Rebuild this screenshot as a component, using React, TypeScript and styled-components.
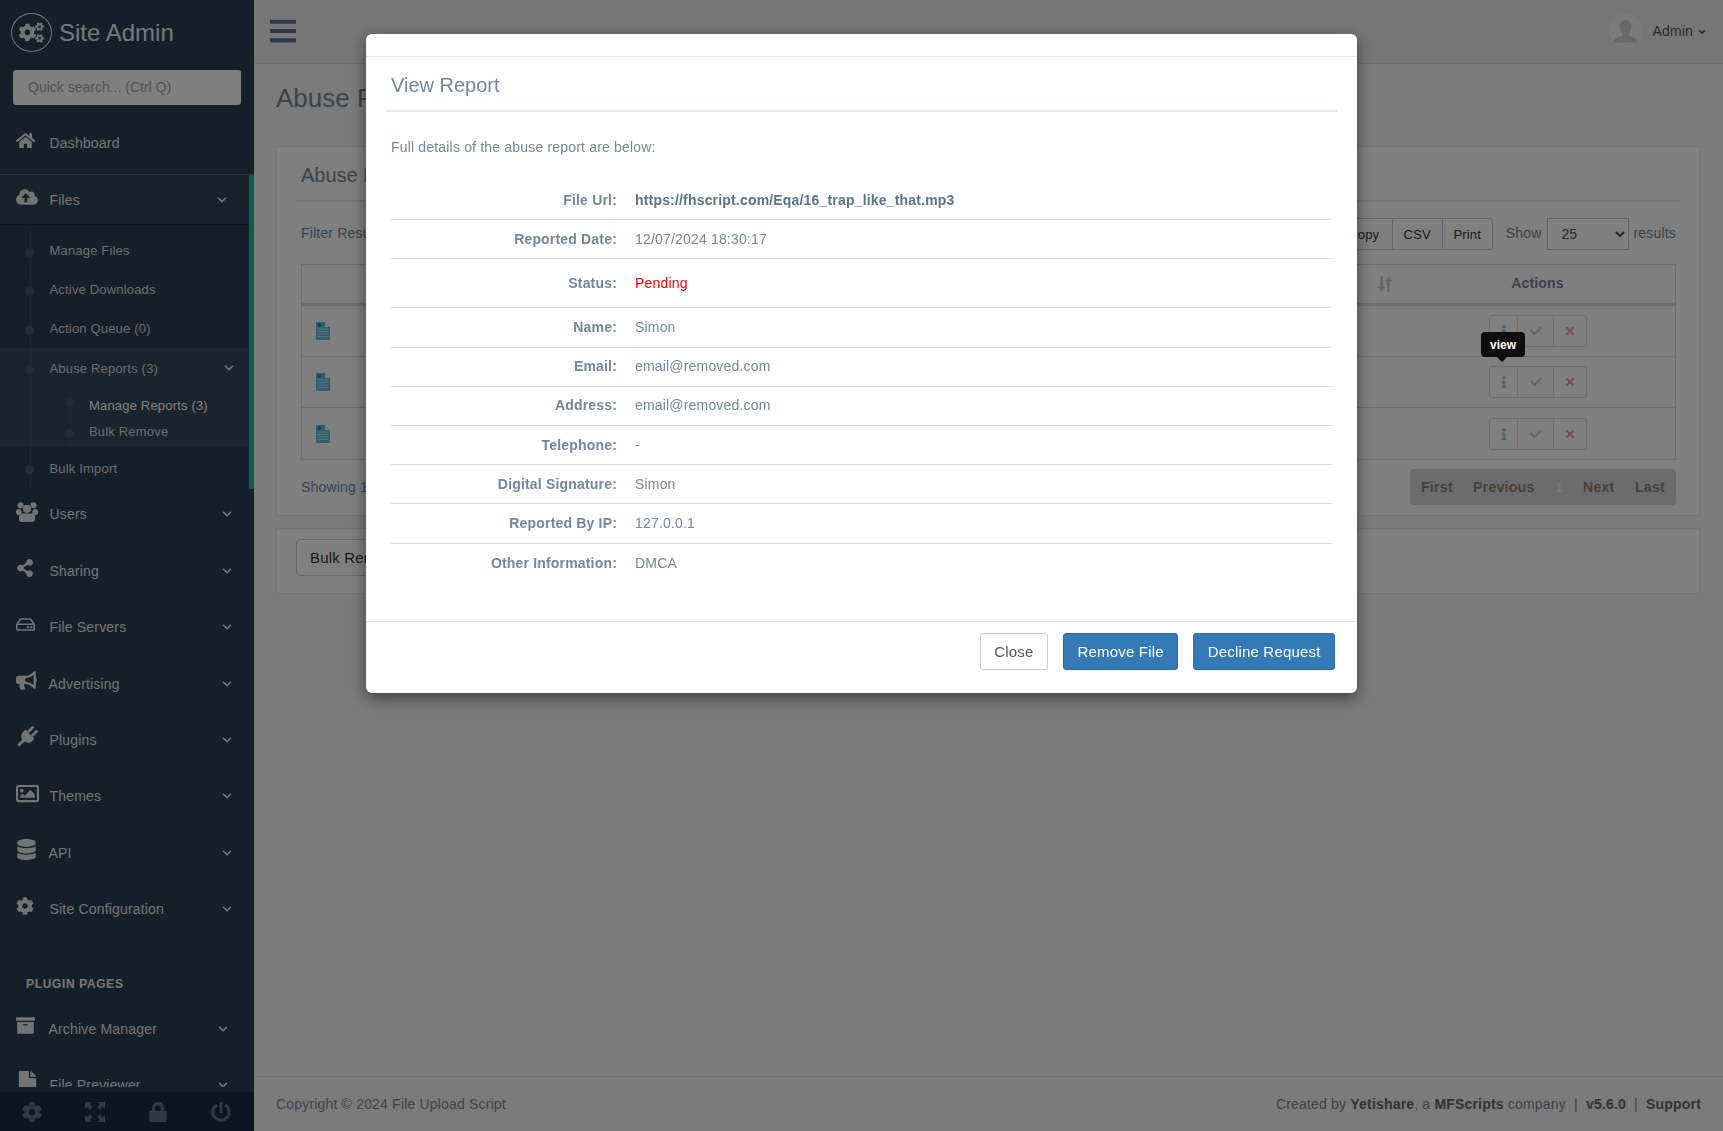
import React from 'react';
import styled, { createGlobalStyle } from 'styled-components';
import {
  FaAngleDown,
  FaArchive,
  FaBars,
  FaBullhorn,
  FaCheck,
  FaChevronDown,
  FaCloudUploadAlt,
  FaCog,
  FaCogs,
  FaDatabase,
  FaFile,
  FaHome,
  FaInfo,
  FaLock,
  FaPowerOff,
  FaRegHdd,
  FaRegImage,
  FaShareAlt,
  FaTimes,
} from 'react-icons/fa';

const GlobalStyle = createGlobalStyle`
  html, body {
    margin: 0;
    height: 100%;
    overflow: hidden;
  }
  body {
    font-family: "Liberation Sans", Arial, sans-serif;
    font-size: 14px;
    letter-spacing: 0.18px;
    color: #73879c;
    background: #f7f7f7;
  }
  * {
    box-sizing: border-box;
  }
`;

const Page = styled.div`
  display: flex;
  height: 1131px;
`;

// sidebar
const Sidebar = styled.aside`
  width: 254px;
  flex: none;
  height: 100%;
  display: flex;
  flex-direction: column;
  background: #2a3f54;
  color: #e7e7e7;
`;

const SidebarScroll = styled.div`
  flex: 1;
  min-height: 0;
  overflow: hidden;
  margin-bottom: 5px;
`;

const Brand = styled.div`
  height: 63px;
  display: flex;
  align-items: center;
  padding: 1px 0 0 11px;
  gap: 7px;
`;

const BrandLogo = styled.span`
  width: 41px;
  height: 39px;
  border: 1px solid #e7e7e7;
  border-radius: 50%;
  display: flex;
  align-items: center;
  justify-content: center;
  font-size: 25px;
`;

const BrandName = styled.span`
  margin-top: 2px;
  font-size: 24px;
  letter-spacing: 0;
  color: #ecf0f1;
`;

const SearchBox = styled.div`
  margin: 7px 13px 13px;
  height: 35px;
  background: #fff;
  border-radius: 3px;
  padding: 0 15px 2px;
  display: flex;
  align-items: center;
  color: #a8a8a8;
  font-size: 14px;
  letter-spacing: 0;
`;

const MenuRow = styled.div<{ $right?: number }>`
  height: 56.4px;
  display: flex;
  align-items: flex-start;
  padding: 0 ${(p) => p.$right ?? 22}px 0 16px;
  font-size: 14px;
  color: #e7e7e7;
  > span {
    line-height: 50px;
  }
`;

const DashboardRow = styled(MenuRow)`
  > span {
    line-height: 51.4px;
  }
`;

const RowIcon = styled.i<{ $size?: number; $width?: number }>`
  width: ${(p) => p.$width ?? 33.5}px;
  flex: none;
  height: 49.4px;
  display: flex;
  align-items: center;
  padding-bottom: 5px;
  font-size: ${(p) => p.$size ?? 18}px;
  color: #e7e7e7;
`;

const Chevron = styled(FaChevronDown)`
  width: 10px;
  height: 10px;
  margin-left: auto;
  color: #e7e7e7;
  flex: none;
`;

const RowChevron = styled(Chevron)`
  margin-top: 20px;
`;

const FilesGroup = styled.div`
  height: 315px;
  border-top: 1px solid #4d5f70;
  border-right: 5px solid #1abb9c;
`;

const FilesHead = styled.div`
  height: 50px;
  display: flex;
  align-items: center;
  padding: 0 22px 0 16px;
  background: linear-gradient(#334556, #2c4257);
  border-bottom: 1px solid #1f2f3f;
  font-size: 14px;
`;

const SubMenu = styled.div`
  position: relative;
  height: 264px;
  padding-top: 6px;
  &::before {
    content: '';
    position: absolute;
    left: 30px;
    top: 6px;
    bottom: 0;
    width: 1px;
    background: #3c5063;
  }
`;

const SubItem = styled.div<{ $height?: number }>`
  position: relative;
  height: ${(p) => p.$height ?? 39}px;
  display: flex;
  align-items: center;
  padding-left: 49.5px;
  font-size: 13px;
  color: #d5d9dd;
  &::before {
    content: '';
    position: absolute;
    left: 25px;
    top: 50%;
    margin-top: -3px;
    width: 9px;
    height: 9px;
    border-radius: 50%;
    background: #425668;
  }
`;

const SubGroup = styled.div`
  position: relative;
  z-index: 1;
  height: 99px;
  background: rgba(255, 255, 255, 0.05);
`;

const SubGroupHead = styled(SubItem)`
  padding-right: 15px;
  padding-top: 1px;
`;

const NestedList = styled.div`
  position: relative;
  height: 60px;
  padding-top: 5px;
  &::before {
    content: '';
    position: absolute;
    left: 70px;
    top: 0;
    bottom: 0;
    width: 1px;
    background: #3c5063;
  }
`;

const NestedItem = styled.div<{ $active?: boolean }>`
  position: relative;
  height: 26px;
  display: flex;
  align-items: center;
  padding-left: 89px;
  font-size: 13px;
  color: ${(p) => (p.$active ? '#fff' : '#d5d9dd')};
  &::before {
    content: '';
    position: absolute;
    left: 65px;
    top: 11px;
    width: 9px;
    height: 9px;
    border-radius: 50%;
    background: #425668;
  }
  &:first-child::before {
    top: 6px;
  }
`;

const SectionTitle = styled.div`
  height: 63px;
  padding: 34px 0 0 26px;
  line-height: 18px;
  font-size: 12px;
  font-weight: bold;
  letter-spacing: 0.65px;
  color: #ecf0f1;
  text-transform: uppercase;
`;

const SidebarFooter = styled.div`
  height: 39px;
  flex: none;
  display: grid;
  grid-template-columns: repeat(4, 1fr);
  background: #172d44;
  align-items: center;
  justify-items: center;
  font-size: 20px;
  color: #5a738e;
  padding-right: 2px;
`;

// main column
const Main = styled.main`
  flex: 1;
  min-width: 0;
  display: flex;
  flex-direction: column;
`;

const TopBar = styled.header`
  height: 64px;
  flex: none;
  display: flex;
  align-items: center;
  justify-content: space-between;
  padding: 0 16px 2px 16px;
  background: #ededed;
  border-bottom: 1px solid #d9dee4;
`;

const Burger = styled(FaBars)`
  width: 26px;
  height: 30px;
  color: #5a738e;
`;

const UserMenu = styled.div`
  display: flex;
  align-items: center;
  gap: 10px;
  font-size: 14px;
  color: #515356;
`;

const UserCaret = styled(FaAngleDown)`
  width: 10px;
  height: 10px;
  margin-left: -6px;
  margin-top: 2px;
`;

const Avatar = styled.span`
  width: 33px;
  height: 33px;
  border-radius: 50%;
  overflow: hidden;
  background: #f5f5f5;
`;

const Content = styled.div`
  flex: 1;
  padding: 0 23px 0 22px;
`;

const PageTitle = styled.h3`
  margin: 0;
  height: 82px;
  padding-top: 19px;
  line-height: 30px;
  font-size: 26px;
  font-weight: normal;
  letter-spacing: 0;
  color: #73879c;
`;

const Panel = styled.section<{ $height: number; $bottom?: number }>`
  height: ${(p) => p.$height}px;
  margin-bottom: ${(p) => p.$bottom ?? 0}px;
  padding: 10px 19px 0;
  background: #fff;
  border: 1px solid #e6e9ed;
`;

const PanelTitle = styled.div`
  height: 45px;
  padding: 6px 0 0 5px;
  line-height: 24px;
  font-size: 20px;
  letter-spacing: 0;
  color: #73879c;
  border-bottom: 2px solid #e6e9ed;
`;

const PanelBody = styled.div`
  padding: 0 4px 0 5px;
`;

const Toolbar = styled.div`
  height: 62px;
  padding-top: 16px;
  display: flex;
  align-items: flex-start;
`;

const FilterLabel = styled.span`
  line-height: 30px;
  margin-right: auto;
`;

const ExportGroup = styled.div`
  display: flex;
  height: 32px;
  margin-right: 13px;
`;

const ExportButton = styled.span<{ $width: number }>`
  width: ${(p) => p.$width}px;
  height: 32px;
  display: flex;
  align-items: center;
  justify-content: center;
  font-size: 13px;
  color: #333;
  background: #fff;
  border: 1px solid #ccc;
  margin-left: -1px;
  &:last-child {
    border-radius: 0 3px 3px 0;
  }
`;

const ShowSelect = styled.select`
  width: 82px;
  height: 32px;
  margin: 0 5px 0 5px;
  padding: 0 10px;
  font-family: inherit;
  font-size: 14px;
  color: #555;
  background: #fff;
  border: 1px solid #ccc;
`;

const ShowLabel = styled.span`
  line-height: 30px;
`;

const Table = styled.div`
  border: 1px solid #ddd;
`;

const TableRow = styled.div<{ $head?: boolean }>`
  height: ${(p) => (p.$head ? 41 : 51)}px;
  display: grid;
  grid-template-columns: 1fr 277px;
  align-items: center;
  border-bottom: ${(p) => (p.$head ? '3px' : '1px')} solid #ddd;
  &:last-child {
    border-bottom: 0;
  }
`;

const FileCell = styled.div`
  padding-left: 14px;
  display: flex;
`;

const SortCell = styled.div`
  display: flex;
  justify-content: flex-end;
  padding-right: 6px;
  color: #ccc;
`;

const ActionsHead = styled.div`
  margin-bottom: 2px;
  padding-left: 2px;
  text-align: center;
  font-weight: bold;
  color: #73879c;
`;

const ActionsCell = styled.div`
  display: flex;
  padding-left: 91px;
`;

const ActionGroup = styled.div`
  position: relative;
  display: flex;
  height: 32px;
  border: 1px solid #ddd;
  border-radius: 3px;
  background: #fff;
`;

const ActionButton = styled.span<{ $width: number; $color: string }>`
  width: ${(p) => p.$width}px;
  display: flex;
  align-items: center;
  justify-content: center;
  color: ${(p) => p.$color};
  font-size: 12px;
  & + & {
    border-left: 1px solid #ddd;
  }
`;

const Tooltip = styled.div`
  position: absolute;
  z-index: 30;
  left: -9px;
  bottom: 40px;
  width: 44px;
  height: 25px;
  display: flex;
  align-items: center;
  justify-content: center;
  font-size: 12px;
  font-weight: bold;
  letter-spacing: 0;
  color: #fff;
  background: #0d0d0d;
  border-radius: 4px;
  &::after {
    content: '';
    position: absolute;
    left: 16px;
    top: 25px;
    border: 5px solid transparent;
    border-bottom: 0;
    border-top-color: #0d0d0d;
  }
`;

const TableFoot = styled.div`
  display: flex;
  justify-content: space-between;
  align-items: center;
  padding-top: 9px;
`;

const Pagination = styled.div`
  width: 266px;
  height: 36px;
  display: flex;
  align-items: center;
  padding-left: 11px;
  font-weight: bold;
  color: #8c8278;
  background: #d8d8d8;
  border-radius: 4px;
`;

const PageLink = styled.span<{ $width: number; $current?: boolean }>`
  width: ${(p) => p.$width}px;
  flex: none;
  letter-spacing: 0.3px;
  color: ${(p) => (p.$current ? '#efefef' : 'inherit')};
`;

const BulkButton = styled.span`
  display: inline-flex;
  align-items: center;
  height: 37px;
  padding: 0 13px;
  font-size: 15px;
  color: #333;
  background: #fff;
  border: 1px solid #ccc;
  border-radius: 4px;
`;

const PageFooter = styled.footer`
  height: 55px;
  flex: none;
  padding: 0 22px;
  display: flex;
  align-items: center;
  justify-content: space-between;
  border-top: 1px solid #e6e6e6;
  background: #f7f7f7;
  b {
    color: #5a6673;
  }
`;

// modal
const Backdrop = styled.div`
  position: fixed;
  z-index: 20;
  inset: 0;
  background: rgba(0, 0, 0, 0.5);
  display: flex;
  justify-content: center;
  align-items: flex-start;
  padding-top: 34px;
`;

const Modal = styled.div`
  width: 991px;
  height: 659px;
  display: flex;
  flex-direction: column;
  background: #fff;
  border-radius: 6px;
  box-shadow: 0 5px 15px rgba(0, 0, 0, 0.5);
`;

const ModalHead = styled.div`
  height: 23px;
  flex: none;
  border-bottom: 1px solid #e5e5e5;
`;

const ModalBody = styled.div`
  flex: 1;
  padding: 0 20px;
`;

const ModalTitle = styled.h2`
  margin: 0;
  height: 55px;
  padding: 16px 0 0 5px;
  line-height: 24px;
  font-size: 20px;
  font-weight: normal;
  letter-spacing: 0;
  color: #73879c;
  border-bottom: 2px solid #e6e9ed;
`;

const Intro = styled.p`
  margin: 0;
  height: 67px;
  padding: 25px 0 0 5px;
  line-height: 20px;
  font-size: 14px;
`;

const Details = styled.div`
  margin: 2px 5px 0;
`;

const DetailRow = styled.div<{ $tall?: boolean }>`
  height: ${(p) => (p.$tall ? 49 : 39.2)}px;
  padding-bottom: 1px;
  display: grid;
  grid-template-columns: 226px 1fr;
  column-gap: 18px;
  align-items: center;
  border-bottom: 1px solid #ddd;
  &:last-child {
    border-bottom: 0;
  }
`;

const DetailLabel = styled.span`
  text-align: right;
  font-weight: bold;
`;

const DetailValue = styled.span<{ $tone?: 'strong' | 'danger' }>`
  font-weight: ${(p) => (p.$tone === 'strong' ? 'bold' : 'normal')};
  color: ${(p) =>
    p.$tone === 'strong' ? '#5a738e' : p.$tone === 'danger' ? '#ff0000' : 'inherit'};
`;

const ModalFoot = styled.div`
  height: 72px;
  flex: none;
  display: flex;
  justify-content: flex-end;
  gap: 15px;
  padding: 11px 22px 0 0;
  border-top: 1px solid #e5e5e5;
`;

const FootButton = styled.span<{ $primary?: boolean }>`
  height: 37px;
  padding: 0 13.5px;
  display: flex;
  align-items: center;
  font-size: 15px;
  color: ${(p) => (p.$primary ? '#fff' : '#555')};
  background: ${(p) => (p.$primary ? '#337ab7' : '#fff')};
  border: 1px solid ${(p) => (p.$primary ? '#2e6da4' : '#ccc')};
  border-radius: 3px;
`;

const FileDoc = () => (
  <svg width='14' height='18' viewBox='0 0 14 18'>
    <path d='M0 0h9l5 5v13H0z' fill='#62bfe2' />
    <path d='M9 0l5 5H9z' fill='#eef8fc' />
    <rect x='1.500' y='1.500' width='4' height='3' fill='#2c88b4' />
    <path d='M1.500 7h11M1.500 9.500h11M1.500 12h11M1.500 14.500h11' stroke='#b4e3f5' strokeWidth='1' />
  </svg>
);

const SortArrows = () => (
  <svg width='14' height='16' viewBox='0 0 14 16' fill='currentColor'>
    <path d='M2.500 0h2.500v11h2L3.700 16 0 11h2.500zM9 16h2.500V5h2.500L10.300 0 7 5h2z' />
  </svg>
);

const Expand = () => (
  <svg width='20' height='20' viewBox='0 0 20 20' fill='currentColor'>
    <path d='M0 0h7L5 2l3 3-3 3-3-3-2 2zM20 0v7l-2-2-3 3-3-3 3-3-2-2zM0 20v-7l2 2 3-3 3 3-3 3 2 2zM20 20h-7l2-2-3-3 3-3 3 3 2-2z' />
  </svg>
);

// plug leaning to the upper right: two prongs, wide body, short tail
const PlugIcon = () => (
  <svg width='22' height='22' viewBox='-1 -1 22 22' fill='currentColor'>
    <g transform='rotate(45 10 10)'>
      <rect x='5.800' y='-2' width='2.800' height='8' rx='1.200' />
      <rect x='11.400' y='-2' width='2.800' height='8' rx='1.200' />
      <path d='M3.500 6h13v3c0 3.500-2.500 5.500-5 6v7h-3v-7c-2.500-.5-5-2.500-5-6z' />
    </g>
  </svg>
);

const UsersIcon = () => (
  <svg width='22' height='20' viewBox='0 0 22 20' fill='currentColor'>
    <circle cx='4.500' cy='3.300' r='3' />
    <circle cx='17.500' cy='3.300' r='3' />
    <circle cx='11' cy='6.800' r='4.100' />
    <rect x='0' y='7' width='5.500' height='6' rx='2.500' />
    <rect x='16.500' y='7' width='5.500' height='6' rx='2.500' />
    <rect x='3' y='11.500' width='16' height='8.500' rx='3' />
  </svg>
);

const UserSilhouette = () => (
  <svg width='33' height='33' viewBox='0 0 33 33'>
    <path
      d='M16.500 6c4 0 6 3 6 6.500 0 3-1.500 5.500-3 7v2l7 3c1 .6 1.500 2 1.500 4H5c0-2 .5-3.400 1.500-4l7-3v-2c-1.500-1.500-3-4-3-7C10.500 9 12.500 6 16.500 6z'
      fill='#d2d2d2'
    />
  </svg>
);

const menuItems = [
  { label: 'Users', icon: <UsersIcon />, size: 22 },
  { label: 'Sharing', icon: <FaShareAlt />, size: 18 },
  { label: 'File Servers', icon: <FaRegHdd />, size: 19 },
  { label: 'Advertising', icon: <FaBullhorn />, size: 21, width: 32.5 },
  { label: 'Plugins', icon: <PlugIcon />, size: 20 },
  { label: 'Themes', icon: <FaRegImage />, size: 23 },
  { label: 'API', icon: <FaDatabase />, size: 21, width: 32.5 },
  { label: 'Site Configuration', icon: <FaCog />, size: 18 },
];

const details: { label: string; value: string; tone?: 'strong' | 'danger'; tall?: boolean }[] = [
  { label: 'File Url:', value: 'https://fhscript.com/Eqa/16_trap_like_that.mp3', tone: 'strong' },
  { label: 'Reported Date:', value: '12/07/2024 18:30:17' },
  { label: 'Status:', value: 'Pending', tone: 'danger', tall: true },
  { label: 'Name:', value: 'Simon' },
  { label: 'Email:', value: 'email@removed.com' },
  { label: 'Address:', value: 'email@removed.com' },
  { label: 'Telephone:', value: '-' },
  { label: 'Digital Signature:', value: 'Simon' },
  { label: 'Reported By IP:', value: '127.0.0.1' },
  { label: 'Other Information:', value: 'DMCA' },
];

const ActionButtons = ({ tooltip }: { tooltip?: boolean }) => (
  <ActionGroup>
    <ActionButton $width={27} $color='#98cdf5'>
      <FaInfo />
    </ActionButton>
    <ActionButton $width={36} $color='#a9e6b0'>
      <FaCheck />
    </ActionButton>
    <ActionButton $width={33} $color='#eea6a6'>
      <FaTimes />
    </ActionButton>
    {tooltip && <Tooltip>view</Tooltip>}
  </ActionGroup>
);

export default function App() {
  return (
    <>
      <GlobalStyle />
      <Page>
        <Sidebar>
          <SidebarScroll>
            <Brand>
              <BrandLogo>
                <FaCogs />
              </BrandLogo>
              <BrandName>Site Admin</BrandName>
            </Brand>
            <SearchBox>Quick search... (Ctrl Q)</SearchBox>
            <DashboardRow>
              <RowIcon $size={19}>
                <FaHome />
              </RowIcon>
              <span>Dashboard</span>
            </DashboardRow>
            <FilesGroup>
              <FilesHead>
                <RowIcon $size={22}>
                  <FaCloudUploadAlt />
                </RowIcon>
                <span>Files</span>
                <Chevron />
              </FilesHead>
              <SubMenu>
                <SubItem>Manage Files</SubItem>
                <SubItem>Active Downloads</SubItem>
                <SubItem>Action Queue (0)</SubItem>
                <SubGroup>
                  <SubGroupHead>
                    Abuse Reports (3)
                    <Chevron />
                  </SubGroupHead>
                  <NestedList>
                    <NestedItem $active>Manage Reports (3)</NestedItem>
                    <NestedItem>Bulk Remove</NestedItem>
                  </NestedList>
                </SubGroup>
                <SubItem $height={42}>Bulk Import</SubItem>
              </SubMenu>
            </FilesGroup>
            {menuItems.map((item) => (
              <MenuRow key={item.label}>
                <RowIcon $size={item.size} $width={item.width}>
                  {item.icon}
                </RowIcon>
                <span>{item.label}</span>
                <RowChevron />
              </MenuRow>
            ))}
            <SectionTitle>Plugin Pages</SectionTitle>
            <MenuRow $right={26}>
              <RowIcon $size={19} $width={32.5}>
                <FaArchive />
              </RowIcon>
              <span>Archive Manager</span>
              <RowChevron />
            </MenuRow>
            <MenuRow $right={26}>
              <RowIcon $size={23}>
                <FaFile />
              </RowIcon>
              <span>File Previewer</span>
              <RowChevron />
            </MenuRow>
          </SidebarScroll>
          <SidebarFooter>
            <FaCog />
            <Expand />
            <FaLock />
            <FaPowerOff />
          </SidebarFooter>
        </Sidebar>
        <Main>
          <TopBar>
            <Burger />
            <UserMenu>
              <Avatar>
                <UserSilhouette />
              </Avatar>
              <span>Admin</span>
              <UserCaret />
            </UserMenu>
          </TopBar>
          <Content>
            <PageTitle>Abuse Reports</PageTitle>
            <Panel $height={370} $bottom={12}>
              <PanelTitle>Abuse Reports</PanelTitle>
              <PanelBody>
                <Toolbar>
                  <FilterLabel>Filter Results:</FilterLabel>
                  <ExportGroup>
                    <ExportButton $width={58}>Copy</ExportButton>
                    <ExportButton $width={51}>CSV</ExportButton>
                    <ExportButton $width={51}>Print</ExportButton>
                  </ExportGroup>
                  <ShowLabel>Show</ShowLabel>
                  <ShowSelect defaultValue='25'>
                    <option>25</option>
                  </ShowSelect>
                  <ShowLabel>results</ShowLabel>
                </Toolbar>
                <Table>
                  <TableRow $head>
                    <SortCell>
                      <SortArrows />
                    </SortCell>
                    <ActionsHead>Actions</ActionsHead>
                  </TableRow>
                  {[0, 1, 2].map((row) => (
                    <TableRow key={row}>
                      <FileCell>
                        <FileDoc />
                      </FileCell>
                      <ActionsCell>
                        <ActionButtons tooltip={row === 1} />
                      </ActionsCell>
                    </TableRow>
                  ))}
                </Table>
                <TableFoot>
                  <span>Showing 1 to 3 of 3</span>
                  <Pagination>
                    <PageLink $width={52}>First</PageLink>
                    <PageLink $width={82}>Previous</PageLink>
                    <PageLink $width={28} $current>
                      1
                    </PageLink>
                    <PageLink $width={52}>Next</PageLink>
                    <PageLink $width={40}>Last</PageLink>
                  </Pagination>
                </TableFoot>
              </PanelBody>
            </Panel>
            <Panel $height={66}>
              <BulkButton>Bulk Remove</BulkButton>
            </Panel>
          </Content>
          <PageFooter>
            <span>Copyright © 2024 File Upload Script</span>
            <span>
              Created by <b>Yetishare</b>, a <b>MFScripts</b> company&nbsp; |&nbsp; <b>v5.6.0</b>
              &nbsp; |&nbsp; <b>Support</b>
            </span>
          </PageFooter>
        </Main>
      </Page>
      <Backdrop>
        <Modal>
          <ModalHead />
          <ModalBody>
            <ModalTitle>View Report</ModalTitle>
            <Intro>Full details of the abuse report are below:</Intro>
            <Details>
              {details.map((row) => (
                <DetailRow key={row.label} $tall={row.tall}>
                  <DetailLabel>{row.label}</DetailLabel>
                  <DetailValue $tone={row.tone}>{row.value}</DetailValue>
                </DetailRow>
              ))}
            </Details>
          </ModalBody>
          <ModalFoot>
            <FootButton>Close</FootButton>
            <FootButton $primary>Remove File</FootButton>
            <FootButton $primary>Decline Request</FootButton>
          </ModalFoot>
        </Modal>
      </Backdrop>
    </>
  );
}
